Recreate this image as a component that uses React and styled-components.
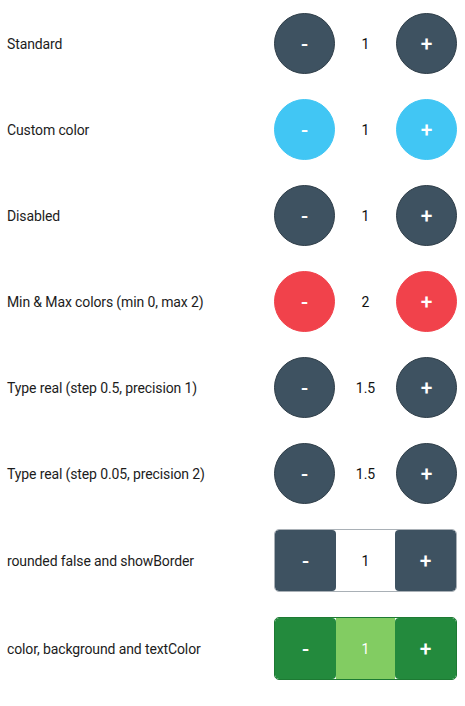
import React from "react";
import styled, { createGlobalStyle } from "styled-components";

const GlobalStyle = createGlobalStyle`
  html, body {
    margin: 0;
    padding: 0;
    background: #ffffff;
    font-family: Roboto, "Noto Sans", sans-serif;
  }
`;

const rows = [
  { label: "Standard", value: "1", bg: "#3e5261", ring: "#2e3d48" },
  { label: "Custom color", value: "1", bg: "#41c6f4", ring: "#41c6f4" },
  { label: "Disabled", value: "1", bg: "#3e5261", ring: "#2e3d48" },
  { label: "Min & Max colors (min 0, max 2)", value: "2", bg: "#f1424b", ring: "#f1424b" },
  { label: "Type real (step 0.5, precision 1)", value: "1.5", bg: "#3e5261", ring: "#2e3d48" },
  { label: "Type real (step 0.05, precision 2)", value: "1.5", bg: "#3e5261", ring: "#2e3d48" },
];

const App = () => (
  <Page>
    <GlobalStyle />
    {rows.map(r => (
      <Row key={r.label}>
        <Label>{r.label}</Label>
        <Stepper>
          <RoundButton bg={r.bg} ring={r.ring}>-</RoundButton>
          <Value>{r.value}</Value>
          <RoundButton bg={r.bg} ring={r.ring}>+</RoundButton>
        </Stepper>
      </Row>
    ))}
    <Row>
      <Label>rounded false and showBorder</Label>
      <BoxStepper border="#a9b0b6">
        <SquareButton bg="#3e5261">-</SquareButton>
        <BoxValue bg="#ffffff" color="#111">1</BoxValue>
        <SquareButton bg="#3e5261">+</SquareButton>
      </BoxStepper>
    </Row>
    <Row>
      <Label>color, background and textColor</Label>
      <BoxStepper border="#1d7a33">
        <SquareButton bg="#238a3d">-</SquareButton>
        <BoxValue bg="#82cc62" color="#ffffff">1</BoxValue>
        <SquareButton bg="#238a3d">+</SquareButton>
      </BoxStepper>
    </Row>
  </Page>
);

const Page = styled.div`
  display: flex;
  flex-direction: column;
`;

const Row = styled.div`
  display: flex;
  align-items: center;
  padding: 13px 8px 12px 7px;
`;

const Label = styled.div`
  flex: 1;
  font-size: 14px;
  letter-spacing: -0.12px;
  color: #1c1c1c;
`;

const Stepper = styled.div`
  display: flex;
  align-items: center;
  width: 183px;
  height: 61px;
`;

const RoundButton = styled.div`
  width: 61px;
  height: 61px;
  box-sizing: border-box;
  border-radius: 50%;
  background: ${p => p.bg};
  border: 1px solid ${p => p.ring};
  color: #ffffff;
  font-size: 21px;
  font-weight: 500;
  display: flex;
  align-items: center;
  justify-content: center;
`;

const Value = styled.div`
  flex: 1;
  text-align: center;
  font-size: 14px;
  color: #111;
`;

const BoxStepper = styled.div`
  display: flex;
  width: 183px;
  height: 63px;
  box-sizing: border-box;
  border: 1px solid ${p => p.border};
  border-radius: 5px;
  overflow: hidden;
`;

const SquareButton = styled.div`
  width: 61px;
  flex-shrink: 0;
  background: ${p => p.bg};
  border-radius: 4px;
  color: #ffffff;
  font-size: 21px;
  font-weight: 500;
  display: flex;
  align-items: center;
  justify-content: center;
`;

const BoxValue = styled.div`
  flex: 1;
  background: ${p => p.bg};
  color: ${p => p.color};
  font-size: 14px;
  display: flex;
  align-items: center;
  justify-content: center;
`;

export default App;
